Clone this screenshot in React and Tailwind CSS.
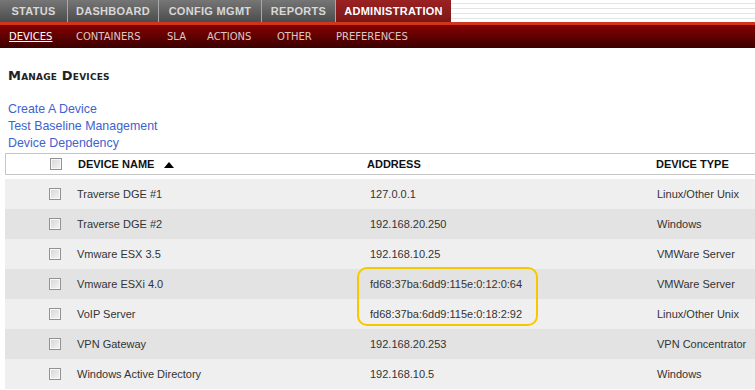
import React from "react";

const tabs = ["STATUS", "DASHBOARD", "CONFIG MGMT", "REPORTS"];
const tabW = ["w-[68px]", "w-[91px]", "w-[103px]", "w-[74px]"];
const sub = [
  ["DEVICES", "w-[67px]"],
  ["CONTAINERS", "w-[91px]"],
  ["SLA", "w-[40px]"],
  ["ACTIONS", "w-[70px]"],
  ["OTHER", "w-[59px]"],
  ["PREFERENCES", "w-[100px]"],
];
const rows = [
  ["Traverse DGE #1", "127.0.0.1", "Linux/Other Unix"],
  ["Traverse DGE #2", "192.168.20.250", "Windows"],
  ["Vmware ESX 3.5", "192.168.10.25", "VMWare Server"],
  ["Vmware ESXi 4.0", "fd68:37ba:6dd9:115e:0:12:0:64", "VMWare Server"],
  ["VoIP Server", "fd68:37ba:6dd9:115e:0:18:2:92", "Linux/Other Unix"],
  ["VPN Gateway", "192.168.20.253", "VPN Concentrator"],
  ["Windows Active Directory", "192.168.10.5", "Windows"],
];

function Box() {
  return (
    <div className="w-[12px] h-[12px] border border-[#929292] bg-[linear-gradient(135deg,#d6d6d6,#f4f4f4)] shadow-[inset_0_0_0_1px_#f8f8f8]" />
  );
}

export default function App() {
  return (
    <div className="w-[755px] h-[390px] overflow-hidden bg-white relative font-['Liberation_Sans',Arial,sans-serif]">
      {/* top tabs */}
      <div className="flex h-[22px]">
        {tabs.map((t, i) => (
          <div
            key={t}
            className={`${tabW[i]} h-full flex items-center justify-center border-r border-[#a8a8a8] bg-[linear-gradient(#767676,#4c4c4c)] text-[11px] font-bold text-[#d8d8d8] tracking-[0.3px]`}
          >
            {t}
          </div>
        ))}
        <div className="w-[115px] h-full flex items-center justify-center bg-[linear-gradient(#9a2222,#7c1717)] text-[11px] font-bold text-white tracking-[0.3px]">
          ADMINISTRATION
        </div>
        <div className="flex-1 h-full bg-[repeating-linear-gradient(#ffffff_0px,#ffffff_3px,#e4e4e4_3px,#e4e4e4_4px,#ffffff_4px,#ffffff_5px)]" />
      </div>
      {/* sub nav */}
      <div className="h-[26px] border-t-[3px] border-[#d0361c] bg-[linear-gradient(#860202,#3a0000)] flex items-center pl-[9px] font-['DejaVu_Sans',Verdana,sans-serif] text-[10px]">
        {sub.map(([s, w], i) => (
          <div key={s} className={`${w} shrink-0`}>
            <span className={i === 0 ? "text-white underline" : "text-[#dcc8c8]"}>{s}</span>
          </div>
        ))}
      </div>

      <div className="pl-[8px] pt-[20px]">
        <div className="h-[16px] leading-[16px] text-[13px] font-bold text-[#222] [font-variant:small-caps] font-['DejaVu_Sans',Verdana,sans-serif] tracking-[0.2px]">
          Manage Devices
        </div>
        <div className="mt-[17px] flex flex-col text-[12.4px] leading-[17px] text-[#3f62cc]">
          <span>Create A Device</span>
          <span>Test Baseline Management</span>
          <span>Device Dependency</span>
        </div>
      </div>

      {/* table */}
      <div className="ml-[5px] mt-[1px]">
        <div className="h-[22px] border-y border-l border-[#c6c6c6] grid grid-cols-[44px_28px_289px_289px_1fr] items-center text-[11px] font-bold text-[#111]">
          <div />
          <Box />
          <div className="flex items-center gap-[10px]">
            <span>DEVICE NAME</span>
            <svg width="10" height="6" viewBox="0 0 10 6" className="mt-[1px]">
              <polygon points="0,6 10,6 5,0" fill="#000" />
            </svg>
          </div>
          <div>ADDRESS</div>
          <div>DEVICE TYPE</div>
        </div>
        <div className="mt-[4px] flex flex-col">
          {rows.map((r, i) => (
            <div
              key={r[0]}
              className={`h-[30px] grid grid-cols-[44px_28px_293px_285px_1fr] items-center text-[11px] text-[#333] ${
                i % 2 === 0 ? "bg-[#efefef]" : "bg-[#e3e3e3]"
              }`}
            >
              <div />
              <Box />
              <div>{r[0]}</div>
              <div>{r[1]}</div>
              <div className="pl-[2px]">{r[2]}</div>
            </div>
          ))}
        </div>
      </div>

      {/* highlight */}
      <div className="absolute left-[357px] top-[267px] w-[181px] h-[59px] border-2 border-[#f5c800] rounded-[10px] pointer-events-none" />
    </div>
  );
}
